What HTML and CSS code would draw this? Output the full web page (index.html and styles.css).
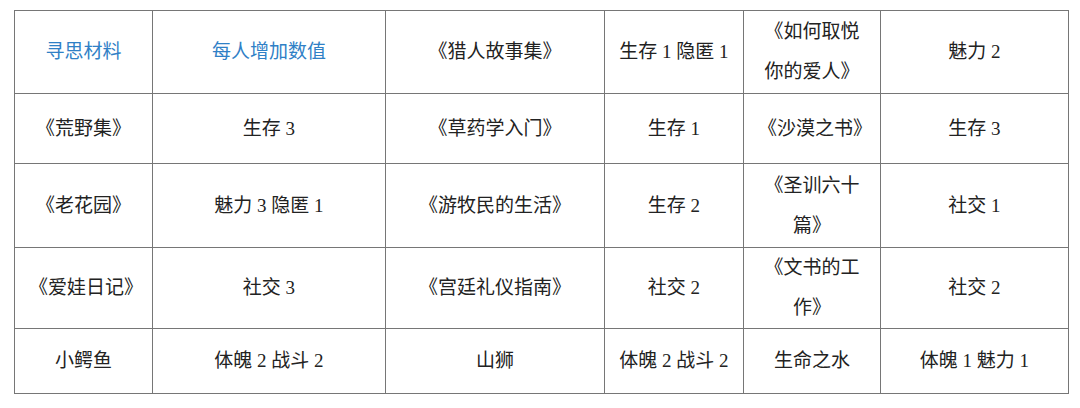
FILE: index.html
```html
<!DOCTYPE html>
<html lang="zh-CN">
<head>
<meta charset="utf-8">
<title>寻思材料</title>
<link rel="stylesheet" href="styles.css">
</head>
<body>
<table class="grid">
  <colgroup>
    <col class="c1"><col class="c2"><col class="c3"><col class="c4"><col class="c5"><col class="c6">
  </colgroup>
  <tr class="r1">
    <td class="head">寻思材料</td>
    <td class="head">每人增加数值</td>
    <td>《猎人故事集》</td>
    <td>生存 1 隐匿 1</td>
    <td>《如何取悦你的爱人》</td>
    <td>魅力 2</td>
  </tr>
  <tr class="r2">
    <td>《荒野集》</td>
    <td>生存 3</td>
    <td>《草药学入门》</td>
    <td>生存 1</td>
    <td>《沙漠之书》</td>
    <td>生存 3</td>
  </tr>
  <tr class="r3">
    <td>《老花园》</td>
    <td>魅力 3 隐匿 1</td>
    <td>《游牧民的生活》</td>
    <td>生存 2</td>
    <td>《圣训六十篇》</td>
    <td>社交 1</td>
  </tr>
  <tr class="r4">
    <td>《爱娃日记》</td>
    <td>社交 3</td>
    <td>《宫廷礼仪指南》</td>
    <td>社交 2</td>
    <td>《文书的工作》</td>
    <td>社交 2</td>
  </tr>
  <tr class="r5">
    <td>小鳄鱼</td>
    <td>体魄 2 战斗 2</td>
    <td>山狮</td>
    <td>体魄 2 战斗 2</td>
    <td>生命之水</td>
    <td>体魄 1 魅力 1</td>
  </tr>
</table>
</body>
</html>
```
FILE: styles.css
```css
html, body {
  background: #ffffff;
}
body {
  margin: 10px 0 0 14px;
  font-family: "Liberation Serif", "Noto Sans CJK SC", serif;
  font-size: 19px;
  color: #222222;
}
.grid {
  border-collapse: collapse;
  table-layout: fixed;
  width: 1055px;
}
.grid td {
  border: 1px solid #767676;
  text-align: center;
  vertical-align: middle;
  padding: 0 14px;
  line-height: 40px;
}
.c1 { width: 138px; }
.c2 { width: 233px; }
.c3 { width: 219px; }
.c4 { width: 139px; }
.c5 { width: 137px; }
.c6 { width: 188px; }
.r1 td { height: 82px; }
.r2 td { height: 69px; }
.r3 td { height: 83px; }
.r4 td { height: 80px; }
.r5 td { height: 64px; }
.grid td.head {
  color: #2f80c6;
}
```
